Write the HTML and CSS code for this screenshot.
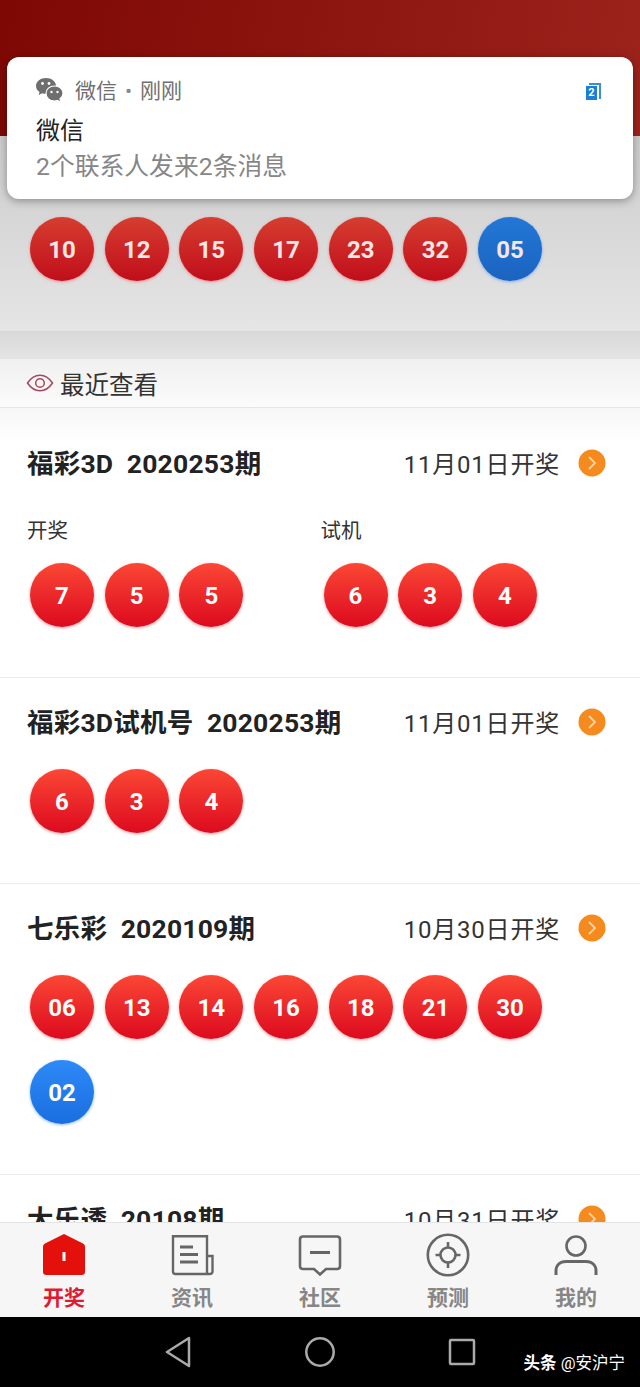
FILE: index.html
```html
<!DOCTYPE html>
<html lang="zh-CN">
  <head>
    <meta charset="UTF-8" />
    <meta name="viewport" content="width=device-width, initial-scale=1.0" />
    <title>开奖</title>
    <link rel="stylesheet" href="styles.css">
  </head>

  <body>
    <div class="page">
      <div class="hero"></div>

      <div class="latest">
        <div class="balls">
          <span class="ball dim">10</span>
          <span class="ball dim">12</span>
          <span class="ball dim">15</span>
          <span class="ball dim">17</span>
          <span class="ball dim">23</span>
          <span class="ball dim">32</span>
          <span class="ball dim blue">05</span>
        </div>
      </div>
      <div class="strip"></div>

      <div class="recent">
        <svg class="eye" viewBox="0 0 28 18" width="28" height="18">
          <path d="M1.500 9C5 3.800 9.200 1.200 14 1.200S23 3.800 26.500 9C23 14.200 18.800 16.800 14 16.800S5 14.200 1.500 9Z" fill="none" stroke="#a5485c" stroke-width="1.500" />
          <circle cx="14" cy="9" r="4.300" fill="none" stroke="#a5485c" stroke-width="1.500" />
        </svg>
        <span>最近查看</span>
      </div>

      <div class="list">
        <section class="card first">
          <div class="card-head">
            <h2>福彩3D  2020253期</h2>
            <div class="draw-date">
              <span>11月01日开奖</span>
              <svg class="arrow" viewBox="0 0 28 28" width="28" height="28">
                <circle cx="14" cy="14" r="13.500" fill="#f58a1f" />
                <path d="M11 8l6 6-6 6" fill="none" stroke="#fbd3a4" stroke-width="1.800" />
              </svg>
            </div>
          </div>
          <div class="groups">
            <div class="group">
              <div class="group-label">开奖</div>
              <div class="balls">
                <span class="ball">7</span>
                <span class="ball">5</span>
                <span class="ball">5</span>
              </div>
            </div>
            <div class="group">
              <div class="group-label">试机</div>
              <div class="balls">
                <span class="ball">6</span>
                <span class="ball">3</span>
                <span class="ball">4</span>
              </div>
            </div>
          </div>
        </section>

        <section class="card">
          <div class="card-head">
            <h2>福彩3D试机号  2020253期</h2>
            <div class="draw-date">
              <span>11月01日开奖</span>
              <svg class="arrow" viewBox="0 0 28 28" width="28" height="28">
                <circle cx="14" cy="14" r="13.500" fill="#f58a1f" />
                <path d="M11 8l6 6-6 6" fill="none" stroke="#fbd3a4" stroke-width="1.800" />
              </svg>
            </div>
          </div>
          <div class="balls">
            <span class="ball">6</span>
            <span class="ball">3</span>
            <span class="ball">4</span>
          </div>
        </section>

        <section class="card">
          <div class="card-head">
            <h2>七乐彩  2020109期</h2>
            <div class="draw-date">
              <span>10月30日开奖</span>
              <svg class="arrow" viewBox="0 0 28 28" width="28" height="28">
                <circle cx="14" cy="14" r="13.500" fill="#f58a1f" />
                <path d="M11 8l6 6-6 6" fill="none" stroke="#fbd3a4" stroke-width="1.800" />
              </svg>
            </div>
          </div>
          <div class="balls">
            <span class="ball">06</span>
            <span class="ball">13</span>
            <span class="ball">14</span>
            <span class="ball">16</span>
            <span class="ball">18</span>
            <span class="ball">21</span>
            <span class="ball">30</span>
            <span class="ball blue">02</span>
          </div>
        </section>

        <section class="card">
          <div class="card-head">
            <h2>大乐透  20108期</h2>
            <div class="draw-date">
              <span>10月31日开奖</span>
              <svg class="arrow" viewBox="0 0 28 28" width="28" height="28">
                <circle cx="14" cy="14" r="13.500" fill="#f58a1f" />
                <path d="M11 8l6 6-6 6" fill="none" stroke="#fbd3a4" stroke-width="1.800" />
              </svg>
            </div>
          </div>
        </section>
      </div>

      <nav class="tabs">
        <a class="tab active">
          <svg viewBox="0 0 44 44" width="44" height="44">
            <path d="M22 1L41 10.500C42.500 11.300 43 12.300 43 14V39C43 41 41.500 42 40 42H4C2.500 42 1 41 1 39V14C1 12.300 1.500 11.300 3 10.500Z" fill="#e4100c" />
            <rect x="20.500" y="19" width="3" height="9" fill="#fff" />
          </svg>
          <span>开奖</span>
        </a>
        <a class="tab">
          <svg viewBox="0 0 44 44" width="44" height="44">
            <path d="M37 23V3.300H3V38.500C3 40 3.800 41 5.500 41H39.500C41.500 41 42.500 40 42.500 38.500V23H37V40" fill="none" stroke="#666" stroke-width="2.400" />
            <path d="M10 14H23M10 21.500H28M10 29H28" stroke="#666" stroke-width="2.800" />
          </svg>
          <span>资讯</span>
        </a>
        <a class="tab">
          <svg viewBox="0 0 44 44" width="44" height="44">
            <path d="M5 3.500H39C41 3.500 42 4.500 42 6.500V33C42 35 41 36 39 36H28L22 41.500L16 36H5C3 36 2 35 2 33V6.500C2 4.500 3 3.500 5 3.500Z" fill="none" stroke="#666" stroke-width="2.600" />
            <path d="M12 19.500H32" stroke="#666" stroke-width="3" />
          </svg>
          <span>社区</span>
        </a>
        <a class="tab">
          <svg viewBox="0 0 44 44" width="44" height="44">
            <circle cx="22" cy="22" r="20.200" fill="none" stroke="#666" stroke-width="2.600" />
            <circle cx="22" cy="22" r="7.500" fill="none" stroke="#666" stroke-width="2.600" />
            <path d="M22 9V15M22 29V35M9.500 22H14.500M29.500 22H34.500" stroke="#666" stroke-width="2.600" />
          </svg>
          <span>预测</span>
        </a>
        <a class="tab">
          <svg viewBox="0 0 44 44" width="44" height="44">
            <circle cx="22" cy="13" r="9.500" fill="none" stroke="#666" stroke-width="2.600" />
            <path d="M2 42V38C2 32 6 28.500 12 28.500H32C38 28.500 42 32 42 38V42" fill="none" stroke="#666" stroke-width="3" />
          </svg>
          <span>我的</span>
        </a>
      </nav>

      <div class="navbar">
        <svg viewBox="0 0 28 32" width="28" height="32">
          <path d="M25 2L3 16L25 30Z" fill="none" stroke="#aaa" stroke-width="2.500" stroke-linejoin="round" />
        </svg>
        <svg viewBox="0 0 32 32" width="32" height="32">
          <circle cx="16" cy="16" r="13.700" fill="none" stroke="#aaa" stroke-width="2.500" />
        </svg>
        <svg viewBox="0 0 28 28" width="28" height="28">
          <rect x="2" y="2" width="24" height="24" rx="1" fill="none" stroke="#aaa" stroke-width="2.500" />
        </svg>
      </div>

      <div class="notice">
        <div class="notice-top">
          <svg class="wechat" viewBox="0 0 27 24" width="27" height="24">
            <path d="M10 0C4.500 0 0 3.500 0 8C0 10.500 1.300 12.500 3.500 14L2.700 17L6.200 15.200C7.200 15.500 8.500 15.800 10 15.800C15.500 15.800 20 12.500 20 8C20 3.500 15.500 0 10 0Z" fill="#6e6e6e" />
            <path d="M18.500 8C13.500 8 10 11.300 10 15.500C10 19.700 13.500 23 18.500 23C19.500 23 20.300 22.800 21.200 22.500L25 24L24 20.800C25.800 19.500 27 17.700 27 15.500C27 11.300 23.500 8 18.500 8Z" fill="#6e6e6e" stroke="#fff" stroke-width="1.200" />
            <circle cx="6.500" cy="5.500" r="1.400" fill="#fff" />
            <circle cx="13" cy="5.500" r="1.400" fill="#fff" />
            <circle cx="15.500" cy="14" r="1.200" fill="#fff" />
            <circle cx="21.500" cy="14" r="1.200" fill="#fff" />
          </svg>
          <span>微信</span>
          <span class="dot">•</span>
          <span>刚刚</span>
          <span class="badge">2</span>
        </div>
        <div class="notice-title">微信</div>
        <div class="notice-body">2个联系人发来2条消息</div>
      </div>

      <div class="mark">头条 <span>@安沪宁</span></div>
    </div>
  </body>
</html>
```

FILE: styles.css
```css
* {
  box-sizing: border-box;
}
html, body {
  margin: 0;
  padding: 0;
}
body {
  font-family: Roboto, "Noto Sans CJK SC", sans-serif;
  color: #222;
  overflow: hidden;
}
.page {
  position: relative;
  width: 640px;
  height: 1387px;
  display: flex;
  flex-direction: column;
  background-color: #fff;
  overflow: hidden;
}

.hero {
  height: 136px;
  flex: none;
  background: linear-gradient(100deg, #7e0804, #9c231c);
}
.latest {
  height: 195px;
  flex: none;
  padding-top: 81px;
  background: linear-gradient(#cccccc, #e5e5e5);
}
.strip {
  height: 28px;
  flex: none;
  background: linear-gradient(#d8d8d8, #e4e4e4);
}
.recent {
  height: 49px;
  flex: none;
  display: flex;
  align-items: center;
  gap: 6px;
  padding-left: 26px;
  font-size: 24.500px;
  color: #333;
  background: linear-gradient(#f0f0f0, #fbfbfb);
  border-bottom: 1px solid #e6e6e6;
}

.balls {
  display: flex;
  flex-wrap: wrap;
  gap: 21px 10.700px;
  max-width: 600px;
  padding-left: 30px;
}
.ball {
  width: 64px;
  height: 64px;
  padding-top: 2px;
  border-radius: 50%;
  display: flex;
  align-items: center;
  justify-content: center;
  font-size: 24px;
  font-weight: 700;
  color: #fff;
  background: linear-gradient(#fb4735, #dc0a1f);
  box-shadow: 0 1px 3px rgba(255, 70, 70, 0.55);
}
.ball.blue {
  background: linear-gradient(#2d8af7, #1a6ee0);
  box-shadow: 0 1px 3px rgba(50, 130, 250, 0.55);
}
.ball.dim {
  color: #f7e6e6;
  background: linear-gradient(#d63d30, #c00e1b);
}
.ball.dim.blue {
  background: linear-gradient(#2377d6, #1b63c0);
}

.list {
  flex: 1;
  min-height: 0;
  overflow: hidden;
}
.card {
  padding: 24px 0 50px;
  border-bottom: 1px solid #ececec;
}
.card.first {
  padding-top: 35px;
  background: linear-gradient(#f7f7f7, #fff 36px);
}
.card-head {
  height: 40px;
  display: flex;
  align-items: center;
  justify-content: space-between;
  padding: 0 34px 0 27px;
  margin-bottom: 27px;
}
.card-head h2 {
  margin: 0;
  padding-bottom: 4px;
  font-size: 26.500px;
  font-weight: 700;
  letter-spacing: 0.200px;
  white-space: pre;
}
.draw-date {
  display: flex;
  align-items: center;
  gap: 18px;
  font-size: 24px;
  letter-spacing: 0.800px;
  color: #333;
}
.draw-date span {
  padding-bottom: 2px;
}
.groups {
  display: flex;
}
.group {
  width: 293.500px;
}
.group-label {
  height: 30px;
  padding-left: 27px;
  margin-bottom: 17px;
  font-size: 20.500px;
  line-height: 30px;
  color: #333;
}
.card.first .card-head {
  margin-bottom: 33px;
}

.tabs {
  height: 95px;
  flex: none;
  display: grid;
  grid-template-columns: repeat(5, 1fr);
  background-color: #f6f6f6;
  border-top: 1px solid #e4e4e4;
}
.tab {
  display: flex;
  flex-direction: column;
  align-items: center;
  padding-top: 10px;
  font-size: 21px;
  font-weight: 700;
  line-height: 30px;
  color: #868686;
}
.tab svg {
  margin-bottom: 6px;
}
.tab.active {
  color: #e01a30;
}

.navbar {
  height: 70px;
  flex: none;
  display: grid;
  grid-template-columns: repeat(3, 142px);
  justify-content: center;
  justify-items: center;
  align-items: center;
  background-color: #000;
}

.notice {
  position: absolute;
  left: 7px;
  top: 57px;
  width: 626px;
  height: 142px;
  padding: 21px 36px 0 29px;
  background-color: #fff;
  border-radius: 12px;
  box-shadow: 0 2px 8px rgba(0, 0, 0, 0.35);
}
.notice-top {
  height: 26px;
  display: flex;
  align-items: center;
  font-size: 21px;
  line-height: 26px;
  color: #6f6f6f;
}
.wechat {
  margin: 0 12px 2px 0;
}
.dot {
  margin: 0 8px;
  color: #888;
}
.badge {
  position: relative;
  width: 11px;
  height: 14px;
  margin: 4px 0 0 auto;
  font-size: 11px;
  font-weight: 700;
  line-height: 14px;
  text-align: center;
  color: #fff;
  background-color: #1a7fd8;
}
.badge::after {
  content: "";
  position: absolute;
  right: -4px;
  top: -3px;
  width: 10px;
  height: 14px;
  border-top: 2px solid #3a90d8;
  border-right: 2px solid #3a90d8;
}
.notice-title {
  margin-top: 9px;
  font-size: 24px;
  line-height: 36px;
  color: #222;
}
.notice-body {
  font-size: 24.800px;
  line-height: 36px;
  color: #868686;
}

.mark {
  position: absolute;
  right: 15px;
  top: 1352px;
  font-size: 16.500px;
  font-weight: 700;
  line-height: 24px;
  color: #fff;
}
.mark span {
  font-weight: 400;
}
```
